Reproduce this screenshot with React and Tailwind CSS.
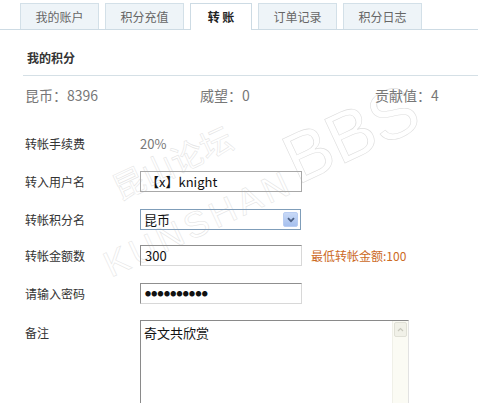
const TABS = [
  { label: '我的账户', w: 'w-[79px]' },
  { label: '积分充值', w: 'w-[79px]' },
  { label: '转 账', w: 'w-[62px]', active: true },
  { label: '订单记录', w: 'w-[79px]' },
  { label: '积分日志', w: 'w-[79px]' },
]

function Label({ children }) {
  return <div className="w-[115px] shrink-0 text-[12px] text-[#333]">{children}</div>
}

function TextBox({ children }) {
  return (
    <div className="w-[162px] h-[21px] flex items-center px-[4px] border border-t-[#8f8f8f] border-l-[#8f8f8f] border-r-[#d8d8d8] border-b-[#d8d8d8] text-[13px] text-[#111]">
      {children}
    </div>
  )
}

export default function App() {
  return (
    <div className="relative w-[478px] h-[403px] overflow-hidden bg-white font-['Noto_Sans_CJK_SC','Liberation_Sans',sans-serif]">
      {/* watermark, behind the form */}
      <div className="pointer-events-none absolute left-[92px] top-[186px] -rotate-[25deg] origin-left whitespace-nowrap">
        <div className="ml-[40px] text-[32px] leading-none text-transparent [-webkit-text-stroke:0.5px_#e2e2e2]">昆山论坛</div>
        <div className="flex items-end">
          <span className="text-[36px] leading-none tracking-[4px] text-transparent [-webkit-text-stroke:0.5px_#e2e2e2] font-['Liberation_Sans',sans-serif]">KUNSHAN</span>
          <span className="ml-[4px] text-[70px] leading-none text-transparent [-webkit-text-stroke:0.6px_#dedede] font-['Liberation_Sans',sans-serif]">BBS</span>
        </div>
      </div>

      <div className="relative">
        {/* tabs */}
        <div className="flex items-end gap-[6px] pl-[20px] pt-[3px] border-b border-[#cddbe4]">
          {TABS.map((t) => (
            <div
              key={t.label}
              className={`${t.w} h-[26px] flex items-center justify-center border border-b-0 text-[12px] ${
                t.active
                  ? 'bg-white border-[#cddbe4] font-bold text-[#222] h-[27px] -mb-px'
                  : 'bg-[#eef4f8] border-[#d3e0e8] text-[#666]'
              }`}
            >
              {t.label}
            </div>
          ))}
        </div>

        {/* heading */}
        <div className="ml-[23px] h-[46px] flex items-center pl-[4px] pt-[10px] border-b border-[#d5e0e6] text-[12px] font-bold text-[#333]">
          我的积分
        </div>

        {/* stats */}
        <div className="flex items-center h-[28px] mt-[5px] pl-[25px] text-[14px] text-[#777]">
          <div className="w-[175px]">昆币：8396</div>
          <div className="w-[175px]">威望：0</div>
          <div>贡献值：4</div>
        </div>

        {/* form */}
        <div className="pl-[25px] mt-[25px] flex flex-col">
          <div className="flex items-center h-[20px]">
            <Label>转帐手续费</Label>
            <span className="text-[13px] text-[#777]">20%</span>
          </div>

          <div className="flex items-center h-[21px] mt-[17px]">
            <Label>转入用户名</Label>
            <div className="w-[162px] h-[21px] flex items-center px-[5px] border border-[#a8a8a8] text-[13px] text-[#111]">
              【x】knight
            </div>
          </div>

          <div className="flex items-center h-[21px] mt-[17px]">
            <Label>转帐积分名</Label>
            <div className="w-[161px] h-[21px] flex items-center justify-between pl-[3px] pr-[2px] border border-[#7f9db9] text-[13px] text-[#111]">
              <span>昆币</span>
              <div className="w-[15px] h-[15px] flex items-center justify-center rounded-[2px] bg-gradient-to-b from-[#c8d9f7] to-[#a6c0ee] border border-[#b9cdf2]">
                <svg width="8" height="6" viewBox="0 0 8 6">
                  <path d="M1 1.2 L4 4.2 L7 1.2" fill="none" stroke="#4d6185" strokeWidth="1.8" />
                </svg>
              </div>
            </div>
          </div>

          <div className="flex items-center h-[21px] mt-[15px]">
            <Label>转帐金额数</Label>
            <TextBox>300</TextBox>
            <span className="ml-[9px] text-[12px] text-[#cc6a1f]">最低转帐金额:100</span>
          </div>

          <div className="flex items-center h-[21px] mt-[17px]">
            <Label>请输入密码</Label>
            <TextBox>
              <span className="text-[6px] tracking-[0.3px]">●●●●●●●●●●</span>
            </TextBox>
          </div>

          <div className="flex items-start mt-[16px]">
            <div className="pt-[4px]">
              <Label>备注</Label>
            </div>
            <div className="w-[269px] h-[100px] flex border border-t-[#8a8a8a] border-l-[#8a8a8a] border-r-[#e2e2e2] border-b-[#e2e2e2]">
              <div className="flex-1 pl-[3px] pt-[2px] text-[13px] text-[#111]">奇文共欣赏</div>
              <div className="w-[16px] flex flex-col bg-[#fbfbf4] border-l border-[#f0f0e8]">
                <div className="h-[15px] m-[1px] flex items-center justify-center rounded-[2px] bg-[#f1f1e8] border border-[#e0e0d6]">
                  <svg width="7" height="5" viewBox="0 0 7 5">
                    <path d="M1 4 L3.5 1.5 L6 4" fill="none" stroke="#c9c9bd" strokeWidth="1.2" />
                  </svg>
                </div>
                <div className="flex-1" />
                <div className="h-[15px] m-[1px] flex items-center justify-center rounded-[2px] bg-[#f1f1e8] border border-[#e0e0d6]">
                  <svg width="7" height="5" viewBox="0 0 7 5">
                    <path d="M1 1 L3.5 3.5 L6 1" fill="none" stroke="#c9c9bd" strokeWidth="1.2" />
                  </svg>
                </div>
              </div>
            </div>
          </div>
        </div>
      </div>
    </div>
  )
}
